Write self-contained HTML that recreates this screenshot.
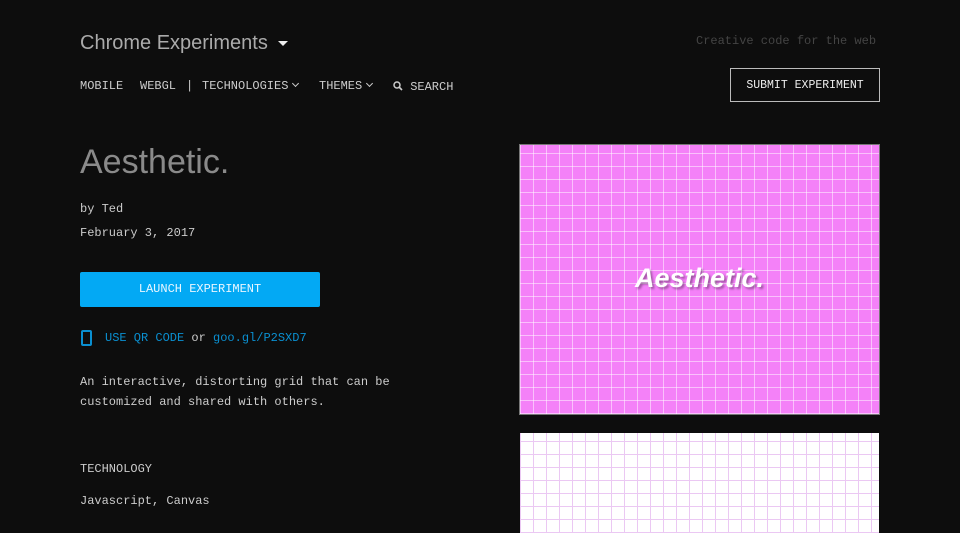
<!DOCTYPE html>
<html><head><style>
body{margin:0;width:960px;height:525px;overflow:hidden;background:#0d0d0d;font-family:"Liberation Mono",monospace;color:#ddd;position:relative}
.a{position:absolute;white-space:nowrap}
.logo{left:80px;top:32px;font-family:"Liberation Sans",sans-serif;font-size:20px;color:#aaa}
.logo:after{content:"";display:inline-block;margin-left:10px;vertical-align:middle;border-left:5px solid transparent;border-right:5px solid transparent;border-top:5px solid #eee}
.tag{left:696px;top:34px;font-size:12px;color:#444}
.nav{top:79px;font-size:12px;color:#ccc}
.sub{left:730px;top:68px;height:34px;border:1px solid #bbb;box-sizing:border-box;font-size:11.5px;text-align:center;line-height:34px;color:#eee;width:150px}
h1{position:absolute;left:80px;top:143px;margin:0;font-family:"Liberation Sans",sans-serif;font-weight:300;font-size:34px;color:#8a8a8a}
.t{font-size:12px;color:#ccc}
.btn{left:80px;top:272px;width:240px;height:35px;background:#03a9f4;border-radius:2px;color:#e8f6ff;font-size:12px;text-align:center;line-height:35px}
.blue{color:#0a8fd0}
.img1{left:520px;top:145px;width:359px;height:269px;background-color:#f481f8;background-image:repeating-linear-gradient(90deg,rgba(255,255,255,.5) 0 1px,transparent 1px 13px),repeating-linear-gradient(0deg,rgba(255,255,255,.5) 0 1px,transparent 1px 13px);outline:1px solid #777}
.img2{left:520px;top:433px;width:359px;height:100px;background-color:#fff;background-image:repeating-linear-gradient(90deg,#ebc8f3 0 1px,transparent 1px 13px),repeating-linear-gradient(0deg,#ebc8f3 0 1px,transparent 1px 13px)}
.ae{left:0;width:359px;top:118px;text-align:center;font-family:"Liberation Sans",sans-serif;font-style:italic;font-weight:bold;font-size:27px;color:#fff;text-shadow:2px 2px 2px rgba(0,0,0,.35)}
.ch{display:inline-block;width:4px;height:4px;border-right:1px solid #ccc;border-bottom:1px solid #ccc;transform:rotate(45deg);margin-left:5px;vertical-align:3px}
</style></head><body>
<div class="a logo">Chrome Experiments</div>
<div class="a tag">Creative code for the web</div>
<div class="a nav" style="left:80px">MOBILE</div>
<div class="a nav" style="left:140px">WEBGL</div>
<div class="a nav" style="left:186px">|</div>
<div class="a nav" style="left:202px">TECHNOLOGIES<span class="ch"></span></div>
<div class="a nav" style="left:319px">THEMES<span class="ch"></span></div>
<div class="a nav" style="left:393px;top:80px"><svg width="10" height="10" viewBox="0 0 10 10" style="vertical-align:-1px"><circle cx="4" cy="4" r="3" fill="none" stroke="#ccc" stroke-width="1.5"/><path d="M6 6L9 9" stroke="#ccc" stroke-width="1.6"/></svg> SEARCH</div>
<div class="a sub">SUBMIT EXPERIMENT</div>
<h1>Aesthetic.</h1>
<div class="a t" style="left:80px;top:202px">by Ted</div>
<div class="a t" style="left:80px;top:226px">February 3, 2017</div>
<div class="a btn">LAUNCH EXPERIMENT</div>
<div class="a" style="left:81px;top:330px;width:7px;height:12px;border:2px solid #0a8fd0;border-radius:2px"></div>
<div class="a t" style="left:105px;top:331px"><span class="blue">USE QR CODE</span> or <span class="blue">goo.gl/P2SXD7</span></div>
<div class="a t" style="left:80px;top:372px;line-height:20px">An interactive, distorting grid that can be<br>customized and shared with others.</div>
<div class="a t" style="left:80px;top:462px">TECHNOLOGY</div>
<div class="a t" style="left:80px;top:494px">Javascript, Canvas</div>
<div class="a img1"><div class="a ae">Aesthetic.</div></div>
<div class="a img2"></div>
</body></html>
